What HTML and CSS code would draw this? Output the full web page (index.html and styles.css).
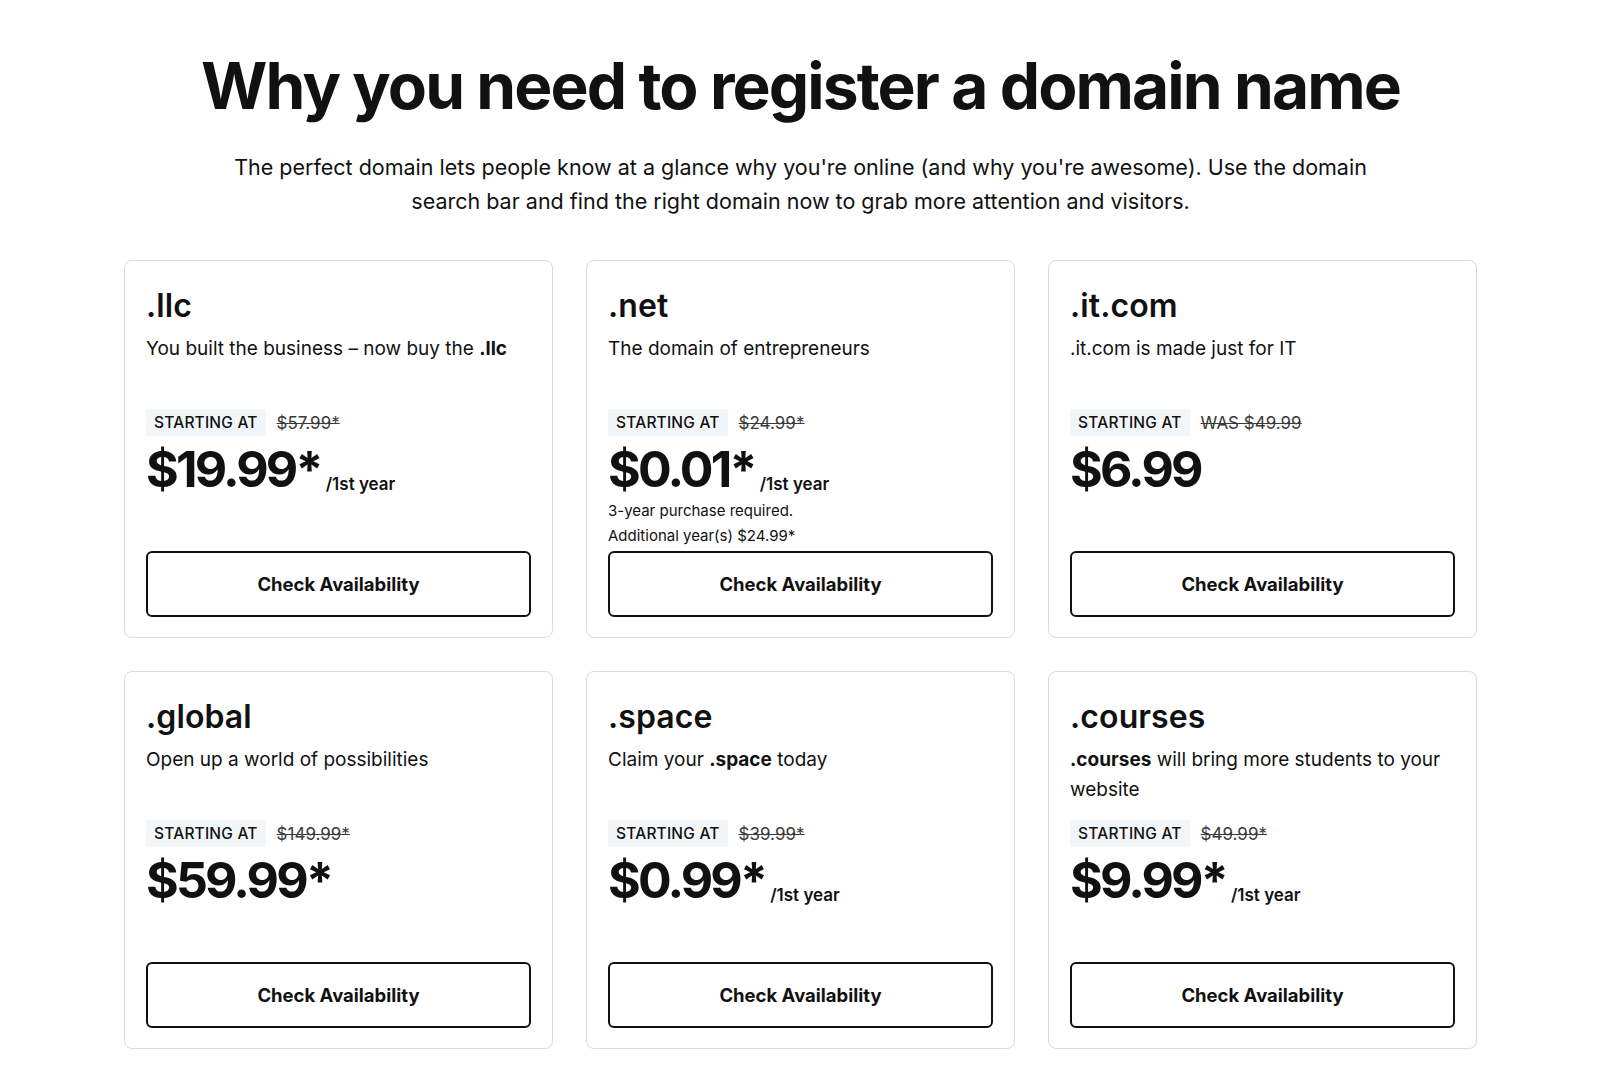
FILE: index.html
```html
<!DOCTYPE html>
<html lang="en">
<head>
<meta charset="utf-8">
<title>Why you need to register a domain name</title>
<link rel="stylesheet" href="styles.css">
</head>
<body>
<main class="page">
  <h1 class="title">Why you need to register a domain name</h1>
  <p class="lead">The perfect domain lets people know at a glance why you're online (and why you're awesome). Use the domain search bar and find the right domain now to grab more attention and visitors.</p>
  <div class="grid">
    <section class="card">
      <h2 class="tld">.llc</h2>
      <p class="desc">You built the business – now buy the <b>.llc</b></p>
      <div class="label-row"><span class="badge">STARTING AT</span><s class="was">$57.99*</s></div>
      <div class="price-row"><span class="price">$19.99*</span><span class="term">/1st year</span></div>
      <button class="btn">Check Availability</button>
    </section>
    <section class="card">
      <h2 class="tld">.net</h2>
      <p class="desc">The domain of entrepreneurs</p>
      <div class="label-row"><span class="badge">STARTING AT</span><s class="was">$24.99*</s></div>
      <div class="price-row"><span class="price">$0.01*</span><span class="term">/1st year</span></div>
      <p class="note">3-year purchase required.<br>Additional year(s) $24.99*</p>
      <button class="btn">Check Availability</button>
    </section>
    <section class="card">
      <h2 class="tld">.it.com</h2>
      <p class="desc">.it.com is made just for IT</p>
      <div class="label-row"><span class="badge">STARTING AT</span><s class="was">WAS $49.99</s></div>
      <div class="price-row"><span class="price">$6.99</span></div>
      <button class="btn">Check Availability</button>
    </section>
    <section class="card">
      <h2 class="tld">.global</h2>
      <p class="desc">Open up a world of possibilities</p>
      <div class="label-row"><span class="badge">STARTING AT</span><s class="was">$149.99*</s></div>
      <div class="price-row"><span class="price">$59.99*</span></div>
      <button class="btn">Check Availability</button>
    </section>
    <section class="card">
      <h2 class="tld">.space</h2>
      <p class="desc">Claim your <b>.space</b> today</p>
      <div class="label-row"><span class="badge">STARTING AT</span><s class="was">$39.99*</s></div>
      <div class="price-row"><span class="price">$0.99*</span><span class="term">/1st year</span></div>
      <button class="btn">Check Availability</button>
    </section>
    <section class="card">
      <h2 class="tld">.courses</h2>
      <p class="desc"><b>.courses</b> will bring more students to your website</p>
      <div class="label-row"><span class="badge">STARTING AT</span><s class="was">$49.99*</s></div>
      <div class="price-row"><span class="price">$9.99*</span><span class="term">/1st year</span></div>
      <button class="btn">Check Availability</button>
    </section>
  </div>
</main>
</body>
</html>
```
FILE: styles.css
```css
* { box-sizing: border-box; }
html, body { margin: 0; padding: 0; background: #fff; }
body {
  font-family: Inter, "Liberation Sans", sans-serif;
  color: #111111;
}
.page {
  width: 1353px;
  margin-left: 124px;
  padding-top: 46px;
}
.title {
  margin: 0;
  text-align: center;
  font-size: 64px;
  line-height: 80px;
  font-weight: 700;
  letter-spacing: -1.9px;
}
.lead {
  margin: 24px auto 0;
  width: 1180px;
  text-align: center;
  font-size: 21.5px;
  line-height: 34px;
  font-weight: 400;
}
.grid {
  margin-top: 42px;
  display: grid;
  grid-template-columns: repeat(3, 429px);
  grid-auto-rows: 1fr;
  column-gap: 33px;
  row-gap: 33px;
}
.card {
  display: flex;
  flex-direction: column;
  border: 1px solid #d6dce1;
  border-radius: 8px;
  padding: 27px 21px 20px;
}
.tld {
  margin: 0;
  font-size: 32px;
  line-height: 36px;
  font-weight: 600;
  letter-spacing: 0.1px;
}
.desc {
  margin: 10px 0 0;
  min-height: 60px;
  font-size: 19px;
  line-height: 30px;
}
.desc b { font-weight: 700; }
.label-row {
  margin-top: 15px;
  display: flex;
  align-items: center;
  gap: 11px;
}
.badge {
  background: #f3f6f8;
  padding: 0 8px;
  height: 27px;
  line-height: 27px;
  font-size: 15.5px;
  font-weight: 500;
  letter-spacing: 0.2px;
  border-radius: 2px;
}
.was {
  font-size: 17px;
  color: #3a3a3a;
}
.price-row {
  margin-top: 5px;
  display: flex;
  align-items: baseline;
  gap: 5px;
}
.price {
  font-size: 50px;
  line-height: 56px;
  font-weight: 700;
  letter-spacing: -2.8px;
}
.term {
  font-size: 17px;
  font-weight: 600;
  position: relative;
  top: 3px;
}
.note {
  margin: 1px 0 3px;
  font-size: 15px;
  line-height: 25px;
}
.btn {
  margin-top: auto;
  height: 66px;
  width: 100%;
  background: #fff;
  border: 2px solid #111;
  border-radius: 6px;
  font-family: inherit;
  font-size: 18.5px;
  font-weight: 700;
  color: #111;
}
```
